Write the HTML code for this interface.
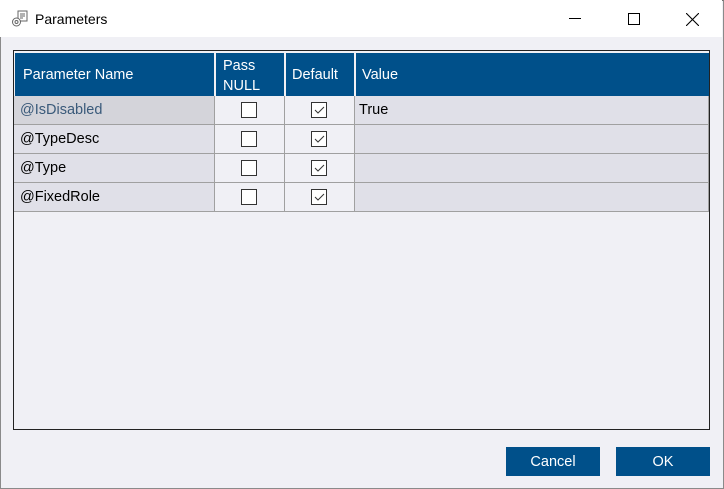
<!DOCTYPE html>
<html><head><style>
*{margin:0;padding:0;box-sizing:border-box}
body{width:724px;height:489px;overflow:hidden;background:#f0f0f5;font-family:"Liberation Sans",sans-serif;position:relative}
.win{position:absolute;left:0;top:0;width:724px;height:489px;border:1px solid #8a8a8a;border-top:1px solid #6f6f6f}
.title{position:absolute;left:0;top:0;width:722px;height:37px;background:#fff}
.title span{position:absolute;left:35px;top:11px;font-size:14px;color:#000}
.box{position:absolute;left:13px;top:50px;width:697px;height:380px;border:1px solid #222;background:#f0f0f5}
.c{position:absolute;font-size:14.5px}
.hd{position:absolute;top:2px;height:43px;background:#00508a;color:#fff}
.cell{position:absolute;height:29px;background:#e0e0e8;border-bottom:1px solid #a0a0a0;border-right:1px solid #a0a0a0}
.cb{position:absolute;width:16px;height:16px;border:1px solid #333;background:#fff}
.btn{position:absolute;top:447px;width:94px;height:29px;background:#00508a;color:#fff;font-size:14.5px;text-align:center;line-height:31px}
</style></head><body>
<div class="win"></div>
<div class="title">
<svg style="position:absolute;left:11px;top:10px" width="18" height="18" viewBox="0 0 18 18"><rect x="7" y="1" width="9" height="10" fill="none" stroke="#666"/><path d="M9 4h5M9 6h5M9 8h3" stroke="#666"/><circle cx="5.5" cy="12" r="4" fill="#fff" stroke="#666"/><circle cx="5.5" cy="12" r="1.5" fill="none" stroke="#666"/></svg>
<span>Parameters</span>
<div style="position:absolute;left:569px;top:18px;width:12px;height:1px;background:#000"></div>
<div style="position:absolute;left:628px;top:13px;width:12px;height:12px;border:1px solid #000"></div>
<svg style="position:absolute;left:686px;top:13px" width="13" height="13"><path d="M0 0L13 13M13 0L0 13" stroke="#000" stroke-width="1.1"/></svg>
</div>
<div class="box">
<div class="hd" style="left:1px;width:199px"><span class="c" style="left:8px;top:14px">Parameter Name</span></div>
<div class="hd" style="left:202px;width:68px"><span class="c" style="left:7px;top:3px;line-height:20px">Pass<br>NULL</span></div>
<div class="hd" style="left:272px;width:68px"><span class="c" style="left:6px;top:14px">Default</span></div>
<div class="hd" style="left:342px;width:353px"><span class="c" style="left:6px;top:14px">Value</span></div>
<div style="position:absolute;left:1px;top:45px;width:694px;height:1px;background:#a0a0a0"></div>
</div>
<div style="position:absolute;left:14px;top:96px">
<div class="cell" style="left:0;top:0;width:201px;background:#d4d4da"><span class="c" style="left:6px;top:6px;color:#3a5a7a">@IsDisabled</span></div>
<div class="cell" style="left:0;top:29px;width:201px"><span class="c" style="left:6px;top:6px">@TypeDesc</span></div>
<div class="cell" style="left:0;top:58px;width:201px"><span class="c" style="left:6px;top:6px">@Type</span></div>
<div class="cell" style="left:0;top:87px;width:201px"><span class="c" style="left:6px;top:6px">@FixedRole</span></div>
<div class="cell" style="left:201px;top:0;width:70px;background:#f0f0f5"><div class="cb" style="left:26px;top:6px"></div></div>
<div class="cell" style="left:201px;top:29px;width:70px;background:#f0f0f5"><div class="cb" style="left:26px;top:6px"></div></div>
<div class="cell" style="left:201px;top:58px;width:70px;background:#f0f0f5"><div class="cb" style="left:26px;top:6px"></div></div>
<div class="cell" style="left:201px;top:87px;width:70px;background:#f0f0f5"><div class="cb" style="left:26px;top:6px"></div></div>
<div class="cell" style="left:271px;top:0;width:70px;background:#f0f0f5"><div class="cb" style="left:26px;top:6px"><svg width="14" height="14" style="position:absolute;left:0;top:0"><path d="M3 7l3 3 6-6" fill="none" stroke="#333"/></svg></div></div>
<div class="cell" style="left:271px;top:29px;width:70px;background:#f0f0f5"><div class="cb" style="left:26px;top:6px"><svg width="14" height="14" style="position:absolute;left:0;top:0"><path d="M3 7l3 3 6-6" fill="none" stroke="#333"/></svg></div></div>
<div class="cell" style="left:271px;top:58px;width:70px;background:#f0f0f5"><div class="cb" style="left:26px;top:6px"><svg width="14" height="14" style="position:absolute;left:0;top:0"><path d="M3 7l3 3 6-6" fill="none" stroke="#333"/></svg></div></div>
<div class="cell" style="left:271px;top:87px;width:70px;background:#f0f0f5"><div class="cb" style="left:26px;top:6px"><svg width="14" height="14" style="position:absolute;left:0;top:0"><path d="M3 7l3 3 6-6" fill="none" stroke="#333"/></svg></div></div>
<div class="cell" style="left:341px;top:0;width:354px"><span class="c" style="left:4px;top:6px">True</span></div>
<div class="cell" style="left:341px;top:29px;width:354px"></div>
<div class="cell" style="left:341px;top:58px;width:354px"></div>
<div class="cell" style="left:341px;top:87px;width:354px"></div>
</div>
<div class="btn" style="left:506px">Cancel</div>
<div class="btn" style="left:616px">OK</div>
</body></html>
